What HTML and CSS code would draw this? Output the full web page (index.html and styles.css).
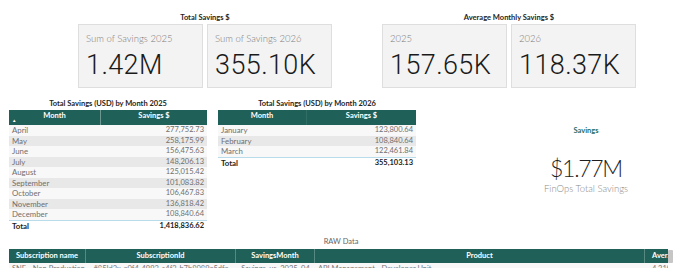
FILE: index.html
```html
<!DOCTYPE html>
<html lang="en">
<head>
<meta charset="utf-8">
<title>FinOps Savings</title>
<link rel="stylesheet" href="styles.css">
</head>
<body>
<div class="page">
  <section class="kpis">
    <div class="kpi-group">
      <div class="group-title">Total Savings $</div>
      <div class="cards">
        <div class="card"><div class="card-label">Sum of Savings 2025</div><div class="card-value">1.42M</div></div>
        <div class="card"><div class="card-label">Sum of Savings 2026</div><div class="card-value">355.10K</div></div>
      </div>
    </div>
    <div class="kpi-group">
      <div class="group-title">Average Monthly Savings $</div>
      <div class="cards">
        <div class="card"><div class="card-label">2025</div><div class="card-value">157.65K</div></div>
        <div class="card"><div class="card-label">2026</div><div class="card-value">118.37K</div></div>
      </div>
    </div>
  </section>

  <section class="mid">
    <div class="tbl">
      <div class="tbl-title">Total Savings (USD) by Month 2025</div>
      <div class="thead">
        <div class="th th-month">Month<span class="sort">&#9650;</span></div>
        <div class="th th-val">Savings $</div>
      </div>
      <div class="tr"><span>April</span><span>277,752.73</span></div>
      <div class="tr alt"><span>May</span><span>258,175.99</span></div>
      <div class="tr"><span>June</span><span>156,475.63</span></div>
      <div class="tr alt"><span>July</span><span>148,206.13</span></div>
      <div class="tr"><span>August</span><span>125,015.42</span></div>
      <div class="tr alt"><span>September</span><span>101,083.82</span></div>
      <div class="tr"><span>October</span><span>106,467.83</span></div>
      <div class="tr alt"><span>November</span><span>136,818.42</span></div>
      <div class="tr"><span>December</span><span>108,840.64</span></div>
      <div class="tr total"><span>Total</span><span>1,418,836.62</span></div>
    </div>

    <div class="tbl tbl-2026">
      <div class="tbl-title">Total Savings (USD) by Month 2026</div>
      <div class="thead">
        <div class="th th-month nodiv">Month</div>
        <div class="th th-val">Savings $</div>
      </div>
      <div class="tr"><span>January</span><span>123,800.64</span></div>
      <div class="tr alt"><span>February</span><span>108,840.64</span></div>
      <div class="tr"><span>March</span><span>122,461.84</span></div>
      <div class="tr total"><span>Total</span><span>355,103.13</span></div>
    </div>

    <div class="savings">
      <div class="sv-title">Savings</div>
      <div class="sv-value">$1.77M</div>
      <div class="sv-label">FinOps Total Savings</div>
    </div>
  </section>

  <section class="raw">
    <div class="raw-title">RAW Data</div>
    <div class="raw-wrap">
      <div class="raw-table">
        <div class="raw-head">
          <div class="rc c1">Subscription name</div>
          <div class="rc c2">SubscriptionId</div>
          <div class="rc c3">SavingsMonth</div>
          <div class="rc c4">Product</div>
          <div class="rc c5">AverageMonthlySavings</div>
        </div>
        <div class="raw-row">
          <div class="rc c1">SNE - Non Production</div>
          <div class="rc c2">#85Id3x-e0f4-4993-c4f3-b7b8089e5dfe</div>
          <div class="rc c3">Savings_us_2025_04</div>
          <div class="rc c4 left">API Management - Developer Unit</div>
          <div class="rc c5">4,210.55</div>
        </div>
      </div>
      <div class="scroll"></div>
    </div>
  </section>
</div>
</body>
</html>
```

FILE: styles.css
```css
* { box-sizing: border-box; }
html, body { margin: 0; padding: 0; background: #ffffff; }
body { font-family: Lato, "Open Sans", sans-serif; color: #333; overflow: hidden; }
.page { width: 680px; height: 268px; overflow: hidden; }

/* KPI cards */
.kpis { display: flex; gap: 50px; padding: 13px 0 0 78px; }
.kpi-group { display: flex; flex-direction: column; }
.group-title { font-size: 7.5px; font-weight: 700; line-height: 10px; text-align: center; color: #252423; margin-bottom: 1px; }
.cards { display: flex; gap: 4px; }
.card { width: 125px; height: 64px; background: #f3f3f3; border: 1px solid #dedede; padding: 8px 0 0 7px; }
.card-label { font-size: 9.5px; font-weight: 300; color: #7e7e7e; line-height: 12px; }
.card-value { font-family: Roboto, "Liberation Sans", sans-serif; font-size: 27px; font-weight: 300; color: #1a1a1a; line-height: 30px; margin-top: 5px; letter-spacing: 0.4px; }

/* middle */
.mid { display: flex; padding-left: 9px; margin-top: 11px; }
.tbl { width: 198px; display: flex; flex-direction: column; }
.tbl-2026 { margin-left: 11px; }
.tbl-title { font-size: 7.5px; font-weight: 700; line-height: 10px; text-align: center; color: #252423; margin-bottom: 1px; }
.thead { display: flex; height: 15px; background: #1f6158; color: #fff; font-size: 7.5px; font-weight: 700; }
.th { position: relative; text-align: center; line-height: 11px; }
.th-month { width: 92px; border-right: 1px solid rgba(255,255,255,0.35); }
.tbl-2026 .th-month { width: 89px; }
.th-month.nodiv { border-right: 1px solid rgba(255,255,255,0.08); }
.th-val { flex: 1; }
.sort { position: absolute; left: 3px; top: 8px; font-size: 4.5px; line-height: 5px; }
.tr { display: flex; justify-content: space-between; height: 10.5px; line-height: 10.5px; font-size: 7.8px; color: #6f6f6f; padding: 0 3px 0 3px; background: #f8f8f8; }
.tr span:last-child { font-size: 7.5px; }
.tr.alt { background: #e8e8e8; }
.tr.total { background: #fff; border-top: 1px solid #b8dcea; color: #222; font-weight: 700; height: 11px; line-height: 10.5px; }

.savings { margin-left: 84px; width: 172px; display: flex; flex-direction: column; align-items: center; padding-top: 27px; }
.sv-title { font-size: 7.5px; font-weight: 700; line-height: 10px; color: #2c6e66; }
.sv-value { font-size: 23px; font-weight: 300; line-height: 26px; color: #1e1e1e; margin-top: 19px; letter-spacing: -1.3px; }
.sv-label { font-size: 9.5px; font-weight: 300; line-height: 12px; color: #8a8a8a; margin-top: 2px; }

/* raw data */
.raw { margin-top: 6px; }
.raw-title { font-size: 7.5px; line-height: 10px; text-align: center; color: #666; margin-bottom: 2px; padding-left: 2px; }
.raw-wrap { display: flex; padding-left: 9px; }
.raw-table { width: 659px; overflow: hidden; }
.raw-head, .raw-row { display: flex; white-space: nowrap; }
.raw-head { background: #1f6158; color: #fff; font-weight: 700; font-size: 7.5px; height: 14.5px; line-height: 14px; }
.raw-row { font-size: 7.5px; color: #777; height: 10.5px; line-height: 11px; background: #f8f8f8; }
.rc { flex: none; overflow: hidden; text-align: center; }
.raw-head .rc { border-right: 1px solid rgba(255,255,255,0.25); }
.c1 { width: 77px; text-align: left; padding-left: 3px; }
.raw-head .c1 { text-align: center; padding-left: 0; }
.c2 { width: 150px; }
.c3 { width: 79px; }
.c4 { width: 330px; }
.c4.left { text-align: left; padding-left: 3px; }
.c5 { width: 120px; text-align: left; padding-left: 7px; }
.scroll { width: 5px; height: 13px; margin-top: 1px; background: #c6c6c6; border-radius: 1px; }
```
